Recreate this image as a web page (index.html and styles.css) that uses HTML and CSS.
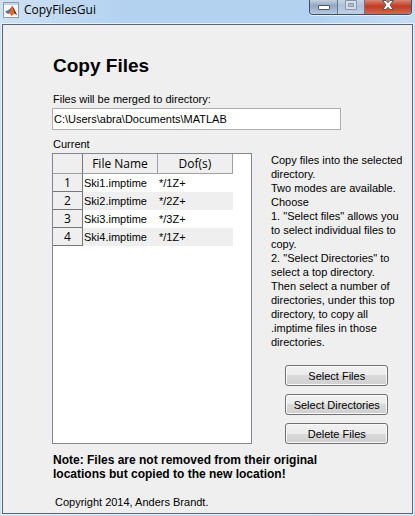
FILE: index.html
```html
<!DOCTYPE html>
<html lang="en">
<head>
<meta charset="utf-8">
<title>CopyFilesGui</title>
<link rel="stylesheet" href="styles.css">
</head>
<body>
<div class="window">
  <header class="titlebar">
    <svg class="app-icon" viewBox="0 0 16 16" aria-hidden="true">
      <rect x="0.5" y="0.5" width="15" height="15" fill="#f8f8f8" stroke="#8f9bb0"/>
      <rect x="1" y="1" width="14" height="2" fill="#c6d3e6"/>
      <path d="M2 9.500 L5.500 8 L8.500 5 L7.500 10 L5 12 Z" fill="#3f78b8"/>
      <path d="M5 12 L7 8.500 L9 3.500 L11 7 L14 13 L11.500 11.500 L8.500 14 L7 11.500 Z" fill="#dc6a26"/>
      <path d="M9 3.500 L10.500 7.500 L11.500 11.500 L14 13 L11 6.500 Z" fill="#8c2418"/>
    </svg>
    <span class="caption">CopyFilesGui</span>
    <div class="controls">
      <button class="control minimize" aria-label="Minimize">
        <svg viewBox="0 0 12 10" width="12" height="10"><rect x="0.5" y="5.500" width="11" height="4" rx="0.500" fill="#fff" stroke="#535666"/></svg>
      </button>
      <button class="control maximize" aria-label="Maximize" disabled>
        <svg viewBox="0 0 12 10" width="12" height="10"><path d="M.5 .5h11v9H.5z" fill="#d4dfeb" stroke="#8796aa"/><path d="M3.500 3.500h5v3h-5z" fill="#b2c2d4" stroke="#8796aa"/></svg>
      </button>
      <button class="control close" aria-label="Close">
        <svg viewBox="0 0 12 10" width="12" height="10"><path d="M.7 .5H4L6 2.700 8 .5h3.300L8 5l3.300 4.500H8L6 7.300 4 9.500H.7L4 5z" fill="#fff" stroke="#535666"/></svg>
      </button>
    </div>
  </header>
  <main class="client">
    <h1>Copy Files</h1>
    <label class="label" for="directory">Files will be merged to directory:</label>
    <input class="directory" id="directory" type="text" value="C:\Users\abra\Documents\MATLAB">
    <div class="label current" id="current">Current</div>
    <div class="columns">
      <div class="files">
        <table aria-labelledby="current">
          <thead>
            <tr><td class="corner"></td><th scope="col">File Name</th><th scope="col">Dof(s)</th></tr>
          </thead>
          <tbody>
            <tr><th scope="row">1</th><td>Ski1.imptime</td><td>*/1Z+</td></tr>
            <tr><th scope="row">2</th><td>Ski2.imptime</td><td>*/2Z+</td></tr>
            <tr><th scope="row">3</th><td>Ski3.imptime</td><td>*/3Z+</td></tr>
            <tr><th scope="row">4</th><td>Ski4.imptime</td><td>*/1Z+</td></tr>
          </tbody>
        </table>
      </div>
      <aside class="side">
        <p class="help">Copy files into the selected<br>directory.<br>Two modes are available.<br>Choose<br>1. "Select files" allows you<br>to select individual files to<br>copy.<br>2. "Select Directories" to<br>select a top directory.<br>Then select a number of<br>directories, under this top<br>directory, to copy all<br>.imptime files in those<br>directories.</p>
        <div class="actions">
          <button class="action">Select Files</button>
          <button class="action">Select Directories</button>
          <button class="action">Delete Files</button>
        </div>
      </aside>
    </div>
    <p class="note">Note: Files are not removed from their original<br>locations but copied to the new location!</p>
    <p class="copyright">Copyright 2014, Anders Brandt.</p>
  </main>
</div>
</body>
</html>
```
FILE: styles.css
```css
* {
  box-sizing: border-box;
}

body {
  margin: 0;
  font: 11px/14px "Liberation Sans", Arial, sans-serif;
  color: #000;
}

h1,
p {
  margin: 0;
}

.window {
  display: flex;
  flex-direction: column;
  min-height: 100vh;
  padding: 0 2px 2px;
  background: linear-gradient(90deg, #cfe1f3, #b3d2f0 30%, #b3d2f0 75%, #c6dcf2);
}

.titlebar {
  display: flex;
  height: 24px;
  padding: 0 1px;
}

.app-icon {
  width: 16px;
  height: 16px;
  margin-top: 2px;
}

.caption {
  margin: 1px 0 0 5px;
  font: 12px/18px "Open Sans", "Noto Sans", sans-serif;
}

.controls {
  display: flex;
  height: 15px;
  margin-left: auto;
  border: 1px solid #434e63;
  border-top: 0;
  border-radius: 0 0 4px 4px;
  box-shadow: 0 1px 0 #e4effa;
  overflow: hidden;
}

.control {
  display: flex;
  align-items: flex-start;
  justify-content: center;
  width: 27px;
  padding: 0;
  border: 0;
  border-right: 1px solid #66758b;
  background: linear-gradient(#c3d2e3, #92a8c1 40%, #b3cbe3);
}

.minimize {
  width: 28px;
}

.maximize {
  background: linear-gradient(#c5d6e8, #aec3da 40%, #bcd2e9);
}

.close {
  width: 46px;
  border-right: 0;
  background: linear-gradient(#d98573, #c23b22 45%, #d66a4a);
}

.client {
  flex: 1;
  padding: 29px 10px 4px 49px;
  border: 1px solid #586575;
  background: #efefef;
  box-shadow: 0 0 0 1px #e6f3ff;
}

h1 {
  margin-left: 1px;
  font-size: 19px;
  line-height: 24px;
}

.label {
  display: block;
  margin: 14px 0 2px 1px;
}

.directory {
  display: block;
  width: 100%;
  max-width: 289px;
  height: 22px;
  padding: 0 1px;
  border: 1px solid #abadb3;
  background: #fff;
  font: inherit;
  color: inherit;
}

.current {
  margin-top: 7px;
}

.columns {
  display: flex;
  gap: 19px;
}

.files {
  flex: none;
  width: 200px;
  min-height: 291px;
  border: 1px solid #828790;
  background: #fff;
}

table {
  width: 180px;
  border-collapse: separate;
  border-spacing: 0;
  table-layout: fixed;
}

th,
td {
  height: 18px;
  padding: 0 1px 1px;
  text-align: left;
}

th,
.corner {
  border-right: 1px solid #a0a0a0;
  border-bottom: 1px solid #a0a0a0;
  background: #efefef;
  font: 12px/16px "Open Sans", "Noto Sans", sans-serif;
  text-align: center;
}

thead th,
.corner {
  height: 20px;
  padding-bottom: 0;
}

.corner,
tbody th {
  width: 30px;
  border-right-color: #777;
}

tbody th {
  padding-bottom: 0;
  border-bottom-color: #777;
}

tbody tr:nth-child(even) td {
  background: #efefef;
}

.side {
  flex: 1;
}

.help {
  white-space: nowrap;
}

.actions {
  display: flex;
  flex-direction: column;
  align-items: center;
  gap: 8px;
  margin-top: 16px;
}

.action {
  width: 103px;
  height: 21px;
  padding: 0;
  border: 1px solid #707070;
  border-radius: 3px;
  background: linear-gradient(#f2f2f2, #ebebeb 50%, #dadada 50%, #cfcfcf);
  box-shadow: inset 0 0 0 1px #fafafa;
  font: inherit;
  color: inherit;
}

.note {
  margin: 9px 0 0 1px;
  font-size: 12px;
  font-weight: bold;
}

.copyright {
  margin: 14px 0 0 3px;
}
```
